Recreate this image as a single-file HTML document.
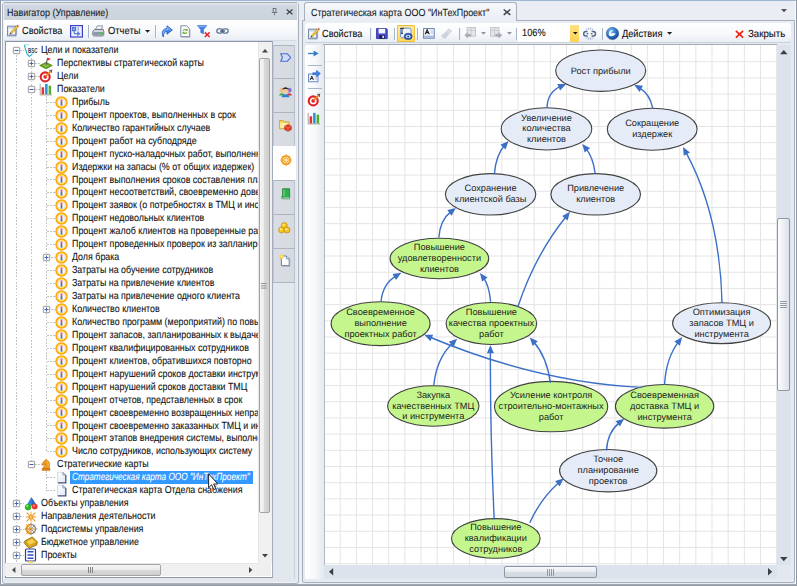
<!DOCTYPE html><html><head><meta charset="utf-8"><title>UI</title><style>
html,body{margin:0;padding:0;}
body{width:797px;height:586px;overflow:hidden;background:#eaeef4;font-family:"Liberation Sans",sans-serif;font-size:9px;color:#1a1a1a;position:relative;}
.a{position:absolute;}
.t{position:absolute;white-space:nowrap;line-height:13px;height:13px;}
.row{position:absolute;white-space:nowrap;line-height:13px;height:13px;font-size:10.3px;color:#111;transform:scaleX(0.862);transform-origin:0 50%;text-rendering:geometricPrecision;-webkit-text-stroke:0.1px currentColor;}
svg{position:absolute;overflow:visible;}
.dt{font-family:"Liberation Sans",sans-serif;font-size:9.22px;fill:#1c1c1c;text-anchor:middle;text-rendering:geometricPrecision;}
</style></head><body>
<div class="a" style="left:0;top:0;width:797px;height:1px;background:#9fb6d4"></div>
<div class="a" style="left:0;top:0;width:1px;height:586px;background:#8f97a4"></div>
<div class="a" style="left:1px;top:1px;width:1px;height:583px;background:#fbfcfd"></div>
<div class="a" style="left:796px;top:0;width:1px;height:586px;background:#8f97a4"></div>
<div class="a" style="left:795px;top:1px;width:1px;height:583px;background:#fbfcfd"></div>
<div class="a" style="left:0;top:584px;width:797px;height:2px;background:linear-gradient(#a9b0bb,#8b919b)"></div>
<div class="a" style="left:2px;top:2px;width:296.5px;height:581.5px;border:1px solid #abb1ba;border-radius:3px;background:#e3e8ef;box-sizing:border-box;box-shadow:inset 0 0 0 1px #eef1f6;"></div>
<div class="a" style="left:3px;top:3px;width:294.5px;height:2px;background:#dde2e9;"></div>
<div class="a" style="left:3.6px;top:4.7px;width:293.3px;height:15.5px;background:linear-gradient(#cfd6df,#cbd3dc);"></div>
<div class="a" style="left:4px;top:20.2px;width:292.5px;height:19.6px;background:linear-gradient(#ffffff,#f7f9fc 55%,#e9eef5);"></div>
<div class="a" style="left:4px;top:39.8px;width:292.5px;height:1.7px;background:linear-gradient(#c9d1dd,#dfe5ee);"></div>
<div class="a" style="left:4.6px;top:41.4px;width:268px;height:536.4px;border:1px solid #8d96a6;border-right-color:#a3acba;border-bottom-color:#9098a8;box-sizing:border-box;background:#fff;"></div>
<div class="row" style="left:7.2px;top:7.2px;color:#1c1c28;transform:scaleX(0.870);">Навигатор (Управление)</div>
<svg width="7" height="8" viewBox="0 0 7 8" style="left:270.8px;top:8.2px"><path d="M1.8,0.5 H5.2 M2.2,0.5 V4.3 M4.9,0.5 V4.3 M0.8,4.5 H6.2 M3.5,4.5 V7.2" fill="none" stroke="#666b76" stroke-width="0.9"/></svg>
<svg width="7.2" height="5.6" viewBox="0 0 7.2 5.6" style="left:286.0px;top:9.1px"><path d="M0.7,0.4 L6.5,5.3 M6.5,0.4 L0.7,5.3" stroke="#41454e" stroke-width="1.28"/></svg>
<svg width="12.5" height="12.5" viewBox="0 0 12.5 12.5" style="left:7.0px;top:24.3px"><rect x="0.6" y="2.2" width="8.2" height="9.6" fill="#f4f6fa" stroke="#6c7f9c" stroke-width="1"/><rect x="1.4" y="3" width="6.6" height="1.6" fill="#c9d4e6"/><path d="M2,10.9 H9.6 V4" fill="none" stroke="#8d9bb3" stroke-width="0.9"/><path d="M3.2,8.6 L9.6,1.8 L11,3.2 L4.6,9.8 Z" fill="#f2c93a" stroke="#a9821a" stroke-width="0.5"/><path d="M9.6,1.8 L10.5,0.8 L12,2.2 L11,3.2 Z" fill="#e0523a"/><path d="M3.2,8.6 L2.6,10.4 L4.6,9.8 Z" fill="#3a3a3a"/></svg>
<div class="row" style="left:21.5px;top:25.2px;color:#111;transform:scaleX(0.895);">Свойства</div>
<svg width="13" height="12.6" viewBox="0 0 13 12.6" style="left:69.5px;top:24.5px"><rect x="0.6" y="0.6" width="11.8" height="11.4" fill="#eef1ff" stroke="#3b40c4" stroke-width="1.2"/><rect x="2.6" y="2.6" width="3.2" height="3.2" fill="#7fa4ea" stroke="#2f55c0" stroke-width="0.7"/><path d="M8.2,2.4 V6.6" stroke="#2f55c0" stroke-width="1" stroke-dasharray="1 0.9"/><path d="M4.2,6 V8.8 H8" fill="none" stroke="#2f55c0" stroke-width="0.9"/><path d="M7.6,7 L10.2,8.8 L7.6,10.6 Z" fill="#5f8fe6" stroke="#2f55c0" stroke-width="0.5"/></svg>
<div class="a" style="left:87.9px;top:25.0px;width:1.3px;height:12.5px;background:#a6b2c6"></div>
<div class="a" style="left:88.9px;top:25.0px;width:1px;height:12.5px;background:#fff;opacity:.8"></div>
<svg width="12.6" height="12" viewBox="0 0 12.6 12" style="left:92.0px;top:24.6px"><path d="M3.4,4.6 L5.2,0.8 H10.6 L9.4,4.6 Z" fill="#f4f6f9" stroke="#7d8796" stroke-width="0.8"/><path d="M0.8,6.4 L2.6,4.4 H11.2 L11.8,6.4 V10 H0.8 Z" fill="#cfd5de" stroke="#5f6b7c" stroke-width="0.9"/><rect x="1.6" y="7" width="9.4" height="2.4" fill="#8e99a8"/><rect x="8" y="7.2" width="2.4" height="1.8" fill="#3fd03a"/><path d="M1.4,11 H11.2" stroke="#7d8796" stroke-width="1"/></svg>
<div class="row" style="left:108.2px;top:25.2px;color:#111;transform:scaleX(0.913);">Отчеты</div>
<svg width="5.2" height="2.8" viewBox="0 0 5.2 2.8" style="left:145.1px;top:29.8px"><path d="M0,0 H5.2 L2.6,2.8 Z" fill="#222"/></svg>
<div class="a" style="left:155.0px;top:25.0px;width:1.3px;height:12.5px;background:#a6b2c6"></div>
<div class="a" style="left:156.0px;top:25.0px;width:1px;height:12.5px;background:#fff;opacity:.8"></div>
<svg width="12" height="12.6" viewBox="0 0 12 12.6" style="left:161.0px;top:24.6px"><path d="M2.4,12 C0.2,8.4 1.2,3.8 6,3.6 V0.8 L11.4,5 L6,9.2 V6.6 C3.6,6.6 2.2,8.6 2.4,12 Z" fill="#3f86ea" stroke="#1f55b8" stroke-width="0.8"/><path d="M2.2,9 C2.2,6 3.8,4.6 6.6,4.6 V2.6 L9.8,5" fill="none" stroke="#a8ccff" stroke-width="0.8"/></svg>
<svg width="10.4" height="12.6" viewBox="0 0 10.4 12.6" style="left:179.6px;top:24.6px"><path d="M0.8,0.8 H6.6 L9.4,3.6 V11.6 H0.8 Z" fill="#fdfdfe" stroke="#737f92" stroke-width="0.9"/><path d="M1.6,12.2 H10 V4.4" fill="none" stroke="#9aa4b5" stroke-width="0.8"/><path d="M2.8,5.8 C3,3.8 5.6,3.2 6.8,4.4 L7.6,3.6 V6 H5.2 L6,5.2 C5.2,4.6 4,4.8 3.8,5.8 Z" fill="#5fae2e"/><path d="M7.4,7 C7.2,9 4.6,9.6 3.4,8.4 L2.6,9.2 V6.8 H5 L4.2,7.6 C5,8.2 6.2,8 6.4,7 Z" fill="#5fae2e"/></svg>
<svg width="13.4" height="12.4" viewBox="0 0 13.4 12.4" style="left:197.0px;top:24.8px"><path d="M0.4,0.6 H9.8 L6.4,4.6 V8.8 L3.8,7.6 V4.6 Z" fill="#3f83e6" stroke="#2a62c2" stroke-width="0.6"/><path d="M1.6,1.4 H8.6" stroke="#9cc4ff" stroke-width="0.8"/><path d="M7.8,7.4 L12.6,12 M12.6,7.4 L7.8,12" stroke="#e8232c" stroke-width="1.5"/></svg>
<svg width="13" height="6" viewBox="0 0 13 6" style="left:216.0px;top:28.2px"><rect x="0.8" y="0.9" width="6" height="4.2" rx="2.1" fill="none" stroke="#5a7194" stroke-width="1.25"/><rect x="6.2" y="0.9" width="6" height="4.2" rx="2.1" fill="none" stroke="#5a7194" stroke-width="1.25"/><path d="M4,3 H9" stroke="#364a6c" stroke-width="1.2"/></svg>
<div class="a" id="tree" style="left:5px;top:42px;width:253px;height:521px;overflow:hidden;">
<div class="a" style="left:10.5px;top:12.5px;width:1px;height:508.6px;background:repeating-linear-gradient(#a0a0a0 0,#a0a0a0 1.7px,transparent 1.7px,transparent 3.24px);opacity:.62"></div>
<div class="a" style="left:25.9px;top:15.5px;width:1px;height:403.2px;background:repeating-linear-gradient(#a0a0a0 0,#a0a0a0 1.7px,transparent 1.7px,transparent 3.24px);opacity:.62"></div>
<div class="a" style="left:41.3px;top:54.3px;width:1px;height:355.5px;background:repeating-linear-gradient(#a0a0a0 0,#a0a0a0 1.7px,transparent 1.7px,transparent 3.24px);opacity:.62"></div>
<div class="a" style="left:41.3px;top:428.7px;width:1px;height:19.9px;background:repeating-linear-gradient(#a0a0a0 0,#a0a0a0 1.7px,transparent 1.7px,transparent 3.24px);opacity:.62"></div>
<div class="a" style="left:15.0px;top:8.0px;height:1px;width:4.0px;background:repeating-linear-gradient(90deg,#a0a0a0 0,#a0a0a0 1.9px,transparent 1.9px,transparent 3.24px);opacity:.62"></div>
<svg width="9" height="9" viewBox="-4.5 -4.5 9 9" style="left:6.5px;top:4.0px"><rect x="-3.2" y="-3.2" width="6.4" height="6.4" rx="0.8" fill="#fafafa" stroke="#8f8f8f" stroke-width="0.9"/><path d="M-2,0 H2" stroke="#4260ae" stroke-width="1"/></svg>
<svg width="15" height="14" viewBox="-7.5 -7 15 14" style="left:18.3px;top:1.5px"><path d="M-6.2,-6.2 L-3.6,2.6 L-1.2,5.4 L1.8,3.2" fill="none" stroke="#2fb4c8" stroke-width="1.2"/><path d="M-6,-6.2 H-1.6" fill="none" stroke="#7fd4e0" stroke-width="0.8"/><path d="M1.8,3.2 L3.6,1.6" fill="none" stroke="#7fd4e0" stroke-width="0.8"/><text x="2.2" y="1.6" font-size="6.6" font-weight="bold" fill="#1f3f5f" text-anchor="middle" style="font-family:'Liberation Sans',sans-serif" textLength="9.4" lengthAdjust="spacingAndGlyphs">BSC</text></svg>
<div class="row" style="left:36.4px;top:2.1px;">Цели и показатели</div>
<div class="a" style="left:30.4px;top:20.9px;height:1px;width:4.4px;background:repeating-linear-gradient(90deg,#a0a0a0 0,#a0a0a0 1.9px,transparent 1.9px,transparent 3.24px);opacity:.62"></div>
<svg width="9" height="9" viewBox="-4.5 -4.5 9 9" style="left:21.9px;top:16.9px"><rect x="-3.2" y="-3.2" width="6.4" height="6.4" rx="0.8" fill="#fafafa" stroke="#8f8f8f" stroke-width="0.9"/><path d="M-2,0 H2 M0,-2 V2" stroke="#4260ae" stroke-width="0.95"/></svg>
<svg width="14" height="13" viewBox="-7 -6.5 14 13" style="left:34.3px;top:14.9px"><path d="M-6.4,2 L0,-1.2 L6.4,2 L0,5.4 Z" fill="#6aa520" stroke="#4c7d12" stroke-width="0.6"/><path d="M-3,2 L0,0.6 L3,2 L0,3.6 Z" fill="#9ad040"/><path d="M0.2,2 L1.4,-5.6" stroke="#555" stroke-width="1"/><path d="M1.5,-5.8 L5,-4.6 L1.2,-2.8 Z" fill="#e8212a"/></svg>
<div class="row" style="left:52.0px;top:15.0px;">Перспективы стратегической карты</div>
<div class="a" style="left:30.4px;top:33.8px;height:1px;width:4.4px;background:repeating-linear-gradient(90deg,#a0a0a0 0,#a0a0a0 1.9px,transparent 1.9px,transparent 3.24px);opacity:.62"></div>
<svg width="9" height="9" viewBox="-4.5 -4.5 9 9" style="left:21.9px;top:29.8px"><rect x="-3.2" y="-3.2" width="6.4" height="6.4" rx="0.8" fill="#fafafa" stroke="#8f8f8f" stroke-width="0.9"/><path d="M-2,0 H2 M0,-2 V2" stroke="#4260ae" stroke-width="0.95"/></svg>
<svg width="14" height="14" viewBox="-7 -7 14 14" style="left:34.3px;top:27.3px"><circle cx="-0.8" cy="0.9" r="4.5" fill="#fff" stroke="#e41f28" stroke-width="2.1"/><circle cx="-0.8" cy="0.9" r="1.8" fill="#e41f28"/><path d="M-0.4,0.4 L4.6,-4.6" stroke="#ee8a18" stroke-width="1.7"/><path d="M3.2,-5.6 L5.6,-5.8 L5.4,-3.2 M4.6,-4.6 L6.2,-6.2" fill="none" stroke="#4a4a4a" stroke-width="0.9"/></svg>
<div class="row" style="left:52.0px;top:27.9px;">Цели</div>
<div class="a" style="left:30.4px;top:46.8px;height:1px;width:4.4px;background:repeating-linear-gradient(90deg,#a0a0a0 0,#a0a0a0 1.9px,transparent 1.9px,transparent 3.24px);opacity:.62"></div>
<svg width="9" height="9" viewBox="-4.5 -4.5 9 9" style="left:21.9px;top:42.8px"><rect x="-3.2" y="-3.2" width="6.4" height="6.4" rx="0.8" fill="#fafafa" stroke="#8f8f8f" stroke-width="0.9"/><path d="M-2,0 H2" stroke="#4260ae" stroke-width="1"/></svg>
<svg width="14" height="13" viewBox="-7 -6.5 14 13" style="left:34.3px;top:40.8px"><rect x="-4.4" y="-2.2" width="2.5" height="7.2" fill="#e0323a"/><rect x="-0.9" y="-5.6" width="2.5" height="10.6" fill="#2d8fd8"/><rect x="2.6" y="-3.8" width="2.5" height="8.8" fill="#4cae2c"/><path d="M-5.8,-5.6 V5.4 H6" fill="none" stroke="#9c8a7a" stroke-width="0.8"/></svg>
<div class="row" style="left:52.0px;top:40.9px;">Показатели</div>
<div class="a" style="left:41.8px;top:59.7px;height:1px;width:8.5px;background:repeating-linear-gradient(90deg,#a0a0a0 0,#a0a0a0 1.9px,transparent 1.9px,transparent 3.24px);opacity:.62"></div>
<svg width="13" height="13" viewBox="-6.5 -6.5 13 13" style="left:50.3px;top:53.7px"><circle r="5.45" fill="#e6eeff" stroke="#ffa408" stroke-width="1.5"/><circle r="4.25" fill="none" stroke="#ffde28" stroke-width="0.9"/><circle r="2.6" fill="#f8faff"/><rect x="-0.9" y="-3" width="1.8" height="2.5" fill="#f0506a"/><rect x="-0.9" y="-0.5" width="1.8" height="3.6" fill="#6e6e78"/></svg>
<div class="row" style="left:67.3px;top:53.8px;">Прибыль</div>
<div class="a" style="left:41.8px;top:72.7px;height:1px;width:8.5px;background:repeating-linear-gradient(90deg,#a0a0a0 0,#a0a0a0 1.9px,transparent 1.9px,transparent 3.24px);opacity:.62"></div>
<svg width="13" height="13" viewBox="-6.5 -6.5 13 13" style="left:50.3px;top:66.7px"><circle r="5.45" fill="#e6eeff" stroke="#ffa408" stroke-width="1.5"/><circle r="4.25" fill="none" stroke="#ffde28" stroke-width="0.9"/><circle r="2.6" fill="#f8faff"/><rect x="-0.9" y="-3" width="1.8" height="2.5" fill="#f0506a"/><rect x="-0.9" y="-0.5" width="1.8" height="3.6" fill="#6e6e78"/></svg>
<div class="row" style="left:67.3px;top:66.8px;">Процент проектов, выполненных в срок</div>
<div class="a" style="left:41.8px;top:85.6px;height:1px;width:8.5px;background:repeating-linear-gradient(90deg,#a0a0a0 0,#a0a0a0 1.9px,transparent 1.9px,transparent 3.24px);opacity:.62"></div>
<svg width="13" height="13" viewBox="-6.5 -6.5 13 13" style="left:50.3px;top:79.6px"><circle r="5.45" fill="#e6eeff" stroke="#ffa408" stroke-width="1.5"/><circle r="4.25" fill="none" stroke="#ffde28" stroke-width="0.9"/><circle r="2.6" fill="#f8faff"/><rect x="-0.9" y="-3" width="1.8" height="2.5" fill="#f0506a"/><rect x="-0.9" y="-0.5" width="1.8" height="3.6" fill="#6e6e78"/></svg>
<div class="row" style="left:67.3px;top:79.7px;">Количество гарантийных случаев</div>
<div class="a" style="left:41.8px;top:98.6px;height:1px;width:8.5px;background:repeating-linear-gradient(90deg,#a0a0a0 0,#a0a0a0 1.9px,transparent 1.9px,transparent 3.24px);opacity:.62"></div>
<svg width="13" height="13" viewBox="-6.5 -6.5 13 13" style="left:50.3px;top:92.6px"><circle r="5.45" fill="#e6eeff" stroke="#ffa408" stroke-width="1.5"/><circle r="4.25" fill="none" stroke="#ffde28" stroke-width="0.9"/><circle r="2.6" fill="#f8faff"/><rect x="-0.9" y="-3" width="1.8" height="2.5" fill="#f0506a"/><rect x="-0.9" y="-0.5" width="1.8" height="3.6" fill="#6e6e78"/></svg>
<div class="row" style="left:67.3px;top:92.7px;">Процент работ на субподряде</div>
<div class="a" style="left:41.8px;top:111.5px;height:1px;width:8.5px;background:repeating-linear-gradient(90deg,#a0a0a0 0,#a0a0a0 1.9px,transparent 1.9px,transparent 3.24px);opacity:.62"></div>
<svg width="13" height="13" viewBox="-6.5 -6.5 13 13" style="left:50.3px;top:105.5px"><circle r="5.45" fill="#e6eeff" stroke="#ffa408" stroke-width="1.5"/><circle r="4.25" fill="none" stroke="#ffde28" stroke-width="0.9"/><circle r="2.6" fill="#f8faff"/><rect x="-0.9" y="-3" width="1.8" height="2.5" fill="#f0506a"/><rect x="-0.9" y="-0.5" width="1.8" height="3.6" fill="#6e6e78"/></svg>
<div class="row" style="left:67.3px;top:105.6px;">Процент пуско-наладочных работ, выполненных в срок</div>
<div class="a" style="left:41.8px;top:124.5px;height:1px;width:8.5px;background:repeating-linear-gradient(90deg,#a0a0a0 0,#a0a0a0 1.9px,transparent 1.9px,transparent 3.24px);opacity:.62"></div>
<svg width="13" height="13" viewBox="-6.5 -6.5 13 13" style="left:50.3px;top:118.5px"><circle r="5.45" fill="#e6eeff" stroke="#ffa408" stroke-width="1.5"/><circle r="4.25" fill="none" stroke="#ffde28" stroke-width="0.9"/><circle r="2.6" fill="#f8faff"/><rect x="-0.9" y="-3" width="1.8" height="2.5" fill="#f0506a"/><rect x="-0.9" y="-0.5" width="1.8" height="3.6" fill="#6e6e78"/></svg>
<div class="row" style="left:67.3px;top:118.6px;">Издержки на запасы (% от общих издержек)</div>
<div class="a" style="left:41.8px;top:137.4px;height:1px;width:8.5px;background:repeating-linear-gradient(90deg,#a0a0a0 0,#a0a0a0 1.9px,transparent 1.9px,transparent 3.24px);opacity:.62"></div>
<svg width="13" height="13" viewBox="-6.5 -6.5 13 13" style="left:50.3px;top:131.4px"><circle r="5.45" fill="#e6eeff" stroke="#ffa408" stroke-width="1.5"/><circle r="4.25" fill="none" stroke="#ffde28" stroke-width="0.9"/><circle r="2.6" fill="#f8faff"/><rect x="-0.9" y="-3" width="1.8" height="2.5" fill="#f0506a"/><rect x="-0.9" y="-0.5" width="1.8" height="3.6" fill="#6e6e78"/></svg>
<div class="row" style="left:67.3px;top:131.5px;">Процент выполнения сроков составления планов</div>
<div class="a" style="left:41.8px;top:150.3px;height:1px;width:8.5px;background:repeating-linear-gradient(90deg,#a0a0a0 0,#a0a0a0 1.9px,transparent 1.9px,transparent 3.24px);opacity:.62"></div>
<svg width="13" height="13" viewBox="-6.5 -6.5 13 13" style="left:50.3px;top:144.3px"><circle r="5.45" fill="#e6eeff" stroke="#ffa408" stroke-width="1.5"/><circle r="4.25" fill="none" stroke="#ffde28" stroke-width="0.9"/><circle r="2.6" fill="#f8faff"/><rect x="-0.9" y="-3" width="1.8" height="2.5" fill="#f0506a"/><rect x="-0.9" y="-0.5" width="1.8" height="3.6" fill="#6e6e78"/></svg>
<div class="row" style="left:67.3px;top:144.4px;">Процент несоответствий, своевременно доведенных</div>
<div class="a" style="left:41.8px;top:163.3px;height:1px;width:8.5px;background:repeating-linear-gradient(90deg,#a0a0a0 0,#a0a0a0 1.9px,transparent 1.9px,transparent 3.24px);opacity:.62"></div>
<svg width="13" height="13" viewBox="-6.5 -6.5 13 13" style="left:50.3px;top:157.3px"><circle r="5.45" fill="#e6eeff" stroke="#ffa408" stroke-width="1.5"/><circle r="4.25" fill="none" stroke="#ffde28" stroke-width="0.9"/><circle r="2.6" fill="#f8faff"/><rect x="-0.9" y="-3" width="1.8" height="2.5" fill="#f0506a"/><rect x="-0.9" y="-0.5" width="1.8" height="3.6" fill="#6e6e78"/></svg>
<div class="row" style="left:67.3px;top:157.4px;">Процент заявок (о потребностях в ТМЦ и инструменте)</div>
<div class="a" style="left:41.8px;top:176.2px;height:1px;width:8.5px;background:repeating-linear-gradient(90deg,#a0a0a0 0,#a0a0a0 1.9px,transparent 1.9px,transparent 3.24px);opacity:.62"></div>
<svg width="13" height="13" viewBox="-6.5 -6.5 13 13" style="left:50.3px;top:170.2px"><circle r="5.45" fill="#e6eeff" stroke="#ffa408" stroke-width="1.5"/><circle r="4.25" fill="none" stroke="#ffde28" stroke-width="0.9"/><circle r="2.6" fill="#f8faff"/><rect x="-0.9" y="-3" width="1.8" height="2.5" fill="#f0506a"/><rect x="-0.9" y="-0.5" width="1.8" height="3.6" fill="#6e6e78"/></svg>
<div class="row" style="left:67.3px;top:170.3px;">Процент недовольных клиентов</div>
<div class="a" style="left:41.8px;top:189.2px;height:1px;width:8.5px;background:repeating-linear-gradient(90deg,#a0a0a0 0,#a0a0a0 1.9px,transparent 1.9px,transparent 3.24px);opacity:.62"></div>
<svg width="13" height="13" viewBox="-6.5 -6.5 13 13" style="left:50.3px;top:183.2px"><circle r="5.45" fill="#e6eeff" stroke="#ffa408" stroke-width="1.5"/><circle r="4.25" fill="none" stroke="#ffde28" stroke-width="0.9"/><circle r="2.6" fill="#f8faff"/><rect x="-0.9" y="-3" width="1.8" height="2.5" fill="#f0506a"/><rect x="-0.9" y="-0.5" width="1.8" height="3.6" fill="#6e6e78"/></svg>
<div class="row" style="left:67.3px;top:183.3px;">Процент жалоб клиентов на проверенные работы</div>
<div class="a" style="left:41.8px;top:202.1px;height:1px;width:8.5px;background:repeating-linear-gradient(90deg,#a0a0a0 0,#a0a0a0 1.9px,transparent 1.9px,transparent 3.24px);opacity:.62"></div>
<svg width="13" height="13" viewBox="-6.5 -6.5 13 13" style="left:50.3px;top:196.1px"><circle r="5.45" fill="#e6eeff" stroke="#ffa408" stroke-width="1.5"/><circle r="4.25" fill="none" stroke="#ffde28" stroke-width="0.9"/><circle r="2.6" fill="#f8faff"/><rect x="-0.9" y="-3" width="1.8" height="2.5" fill="#f0506a"/><rect x="-0.9" y="-0.5" width="1.8" height="3.6" fill="#6e6e78"/></svg>
<div class="row" style="left:67.3px;top:196.2px;">Процент проведенных проверок из запланированных</div>
<div class="a" style="left:45.8px;top:215.1px;height:1px;width:4.5px;background:repeating-linear-gradient(90deg,#a0a0a0 0,#a0a0a0 1.9px,transparent 1.9px,transparent 3.24px);opacity:.62"></div>
<svg width="9" height="9" viewBox="-4.5 -4.5 9 9" style="left:37.3px;top:211.1px"><rect x="-3.2" y="-3.2" width="6.4" height="6.4" rx="0.8" fill="#fafafa" stroke="#8f8f8f" stroke-width="0.9"/><path d="M-2,0 H2 M0,-2 V2" stroke="#4260ae" stroke-width="0.95"/></svg>
<svg width="13" height="13" viewBox="-6.5 -6.5 13 13" style="left:50.3px;top:209.1px"><circle r="5.45" fill="#e6eeff" stroke="#ffa408" stroke-width="1.5"/><circle r="4.25" fill="none" stroke="#ffde28" stroke-width="0.9"/><circle r="2.6" fill="#f8faff"/><rect x="-0.9" y="-3" width="1.8" height="2.5" fill="#f0506a"/><rect x="-0.9" y="-0.5" width="1.8" height="3.6" fill="#6e6e78"/></svg>
<div class="row" style="left:67.3px;top:209.2px;">Доля брака</div>
<div class="a" style="left:41.8px;top:228.0px;height:1px;width:8.5px;background:repeating-linear-gradient(90deg,#a0a0a0 0,#a0a0a0 1.9px,transparent 1.9px,transparent 3.24px);opacity:.62"></div>
<svg width="13" height="13" viewBox="-6.5 -6.5 13 13" style="left:50.3px;top:222.0px"><circle r="5.45" fill="#e6eeff" stroke="#ffa408" stroke-width="1.5"/><circle r="4.25" fill="none" stroke="#ffde28" stroke-width="0.9"/><circle r="2.6" fill="#f8faff"/><rect x="-0.9" y="-3" width="1.8" height="2.5" fill="#f0506a"/><rect x="-0.9" y="-0.5" width="1.8" height="3.6" fill="#6e6e78"/></svg>
<div class="row" style="left:67.3px;top:222.1px;">Затраты на обучение сотрудников</div>
<div class="a" style="left:41.8px;top:241.0px;height:1px;width:8.5px;background:repeating-linear-gradient(90deg,#a0a0a0 0,#a0a0a0 1.9px,transparent 1.9px,transparent 3.24px);opacity:.62"></div>
<svg width="13" height="13" viewBox="-6.5 -6.5 13 13" style="left:50.3px;top:235.0px"><circle r="5.45" fill="#e6eeff" stroke="#ffa408" stroke-width="1.5"/><circle r="4.25" fill="none" stroke="#ffde28" stroke-width="0.9"/><circle r="2.6" fill="#f8faff"/><rect x="-0.9" y="-3" width="1.8" height="2.5" fill="#f0506a"/><rect x="-0.9" y="-0.5" width="1.8" height="3.6" fill="#6e6e78"/></svg>
<div class="row" style="left:67.3px;top:235.1px;">Затраты на привлечение клиентов</div>
<div class="a" style="left:41.8px;top:253.9px;height:1px;width:8.5px;background:repeating-linear-gradient(90deg,#a0a0a0 0,#a0a0a0 1.9px,transparent 1.9px,transparent 3.24px);opacity:.62"></div>
<svg width="13" height="13" viewBox="-6.5 -6.5 13 13" style="left:50.3px;top:247.9px"><circle r="5.45" fill="#e6eeff" stroke="#ffa408" stroke-width="1.5"/><circle r="4.25" fill="none" stroke="#ffde28" stroke-width="0.9"/><circle r="2.6" fill="#f8faff"/><rect x="-0.9" y="-3" width="1.8" height="2.5" fill="#f0506a"/><rect x="-0.9" y="-0.5" width="1.8" height="3.6" fill="#6e6e78"/></svg>
<div class="row" style="left:67.3px;top:248.0px;">Затраты на привлечение одного клиента</div>
<div class="a" style="left:45.8px;top:266.8px;height:1px;width:4.5px;background:repeating-linear-gradient(90deg,#a0a0a0 0,#a0a0a0 1.9px,transparent 1.9px,transparent 3.24px);opacity:.62"></div>
<svg width="9" height="9" viewBox="-4.5 -4.5 9 9" style="left:37.3px;top:262.8px"><rect x="-3.2" y="-3.2" width="6.4" height="6.4" rx="0.8" fill="#fafafa" stroke="#8f8f8f" stroke-width="0.9"/><path d="M-2,0 H2 M0,-2 V2" stroke="#4260ae" stroke-width="0.95"/></svg>
<svg width="13" height="13" viewBox="-6.5 -6.5 13 13" style="left:50.3px;top:260.8px"><circle r="5.45" fill="#e6eeff" stroke="#ffa408" stroke-width="1.5"/><circle r="4.25" fill="none" stroke="#ffde28" stroke-width="0.9"/><circle r="2.6" fill="#f8faff"/><rect x="-0.9" y="-3" width="1.8" height="2.5" fill="#f0506a"/><rect x="-0.9" y="-0.5" width="1.8" height="3.6" fill="#6e6e78"/></svg>
<div class="row" style="left:67.3px;top:260.9px;">Количество клиентов</div>
<div class="a" style="left:41.8px;top:279.8px;height:1px;width:8.5px;background:repeating-linear-gradient(90deg,#a0a0a0 0,#a0a0a0 1.9px,transparent 1.9px,transparent 3.24px);opacity:.62"></div>
<svg width="13" height="13" viewBox="-6.5 -6.5 13 13" style="left:50.3px;top:273.8px"><circle r="5.45" fill="#e6eeff" stroke="#ffa408" stroke-width="1.5"/><circle r="4.25" fill="none" stroke="#ffde28" stroke-width="0.9"/><circle r="2.6" fill="#f8faff"/><rect x="-0.9" y="-3" width="1.8" height="2.5" fill="#f0506a"/><rect x="-0.9" y="-0.5" width="1.8" height="3.6" fill="#6e6e78"/></svg>
<div class="row" style="left:67.3px;top:273.9px;">Количество программ (мероприятий) по повышению</div>
<div class="a" style="left:41.8px;top:292.7px;height:1px;width:8.5px;background:repeating-linear-gradient(90deg,#a0a0a0 0,#a0a0a0 1.9px,transparent 1.9px,transparent 3.24px);opacity:.62"></div>
<svg width="13" height="13" viewBox="-6.5 -6.5 13 13" style="left:50.3px;top:286.7px"><circle r="5.45" fill="#e6eeff" stroke="#ffa408" stroke-width="1.5"/><circle r="4.25" fill="none" stroke="#ffde28" stroke-width="0.9"/><circle r="2.6" fill="#f8faff"/><rect x="-0.9" y="-3" width="1.8" height="2.5" fill="#f0506a"/><rect x="-0.9" y="-0.5" width="1.8" height="3.6" fill="#6e6e78"/></svg>
<div class="row" style="left:67.3px;top:286.8px;">Процент запасов, запланированных к выдаче</div>
<div class="a" style="left:41.8px;top:305.7px;height:1px;width:8.5px;background:repeating-linear-gradient(90deg,#a0a0a0 0,#a0a0a0 1.9px,transparent 1.9px,transparent 3.24px);opacity:.62"></div>
<svg width="13" height="13" viewBox="-6.5 -6.5 13 13" style="left:50.3px;top:299.7px"><circle r="5.45" fill="#e6eeff" stroke="#ffa408" stroke-width="1.5"/><circle r="4.25" fill="none" stroke="#ffde28" stroke-width="0.9"/><circle r="2.6" fill="#f8faff"/><rect x="-0.9" y="-3" width="1.8" height="2.5" fill="#f0506a"/><rect x="-0.9" y="-0.5" width="1.8" height="3.6" fill="#6e6e78"/></svg>
<div class="row" style="left:67.3px;top:299.8px;">Процент квалифицированных сотрудников</div>
<div class="a" style="left:41.8px;top:318.6px;height:1px;width:8.5px;background:repeating-linear-gradient(90deg,#a0a0a0 0,#a0a0a0 1.9px,transparent 1.9px,transparent 3.24px);opacity:.62"></div>
<svg width="13" height="13" viewBox="-6.5 -6.5 13 13" style="left:50.3px;top:312.6px"><circle r="5.45" fill="#e6eeff" stroke="#ffa408" stroke-width="1.5"/><circle r="4.25" fill="none" stroke="#ffde28" stroke-width="0.9"/><circle r="2.6" fill="#f8faff"/><rect x="-0.9" y="-3" width="1.8" height="2.5" fill="#f0506a"/><rect x="-0.9" y="-0.5" width="1.8" height="3.6" fill="#6e6e78"/></svg>
<div class="row" style="left:67.3px;top:312.7px;">Процент клиентов, обратившихся повторно</div>
<div class="a" style="left:41.8px;top:331.6px;height:1px;width:8.5px;background:repeating-linear-gradient(90deg,#a0a0a0 0,#a0a0a0 1.9px,transparent 1.9px,transparent 3.24px);opacity:.62"></div>
<svg width="13" height="13" viewBox="-6.5 -6.5 13 13" style="left:50.3px;top:325.6px"><circle r="5.45" fill="#e6eeff" stroke="#ffa408" stroke-width="1.5"/><circle r="4.25" fill="none" stroke="#ffde28" stroke-width="0.9"/><circle r="2.6" fill="#f8faff"/><rect x="-0.9" y="-3" width="1.8" height="2.5" fill="#f0506a"/><rect x="-0.9" y="-0.5" width="1.8" height="3.6" fill="#6e6e78"/></svg>
<div class="row" style="left:67.3px;top:325.7px;">Процент нарушений сроков доставки инструмента</div>
<div class="a" style="left:41.8px;top:344.5px;height:1px;width:8.5px;background:repeating-linear-gradient(90deg,#a0a0a0 0,#a0a0a0 1.9px,transparent 1.9px,transparent 3.24px);opacity:.62"></div>
<svg width="13" height="13" viewBox="-6.5 -6.5 13 13" style="left:50.3px;top:338.5px"><circle r="5.45" fill="#e6eeff" stroke="#ffa408" stroke-width="1.5"/><circle r="4.25" fill="none" stroke="#ffde28" stroke-width="0.9"/><circle r="2.6" fill="#f8faff"/><rect x="-0.9" y="-3" width="1.8" height="2.5" fill="#f0506a"/><rect x="-0.9" y="-0.5" width="1.8" height="3.6" fill="#6e6e78"/></svg>
<div class="row" style="left:67.3px;top:338.6px;">Процент нарушений сроков доставки ТМЦ</div>
<div class="a" style="left:41.8px;top:357.5px;height:1px;width:8.5px;background:repeating-linear-gradient(90deg,#a0a0a0 0,#a0a0a0 1.9px,transparent 1.9px,transparent 3.24px);opacity:.62"></div>
<svg width="13" height="13" viewBox="-6.5 -6.5 13 13" style="left:50.3px;top:351.5px"><circle r="5.45" fill="#e6eeff" stroke="#ffa408" stroke-width="1.5"/><circle r="4.25" fill="none" stroke="#ffde28" stroke-width="0.9"/><circle r="2.6" fill="#f8faff"/><rect x="-0.9" y="-3" width="1.8" height="2.5" fill="#f0506a"/><rect x="-0.9" y="-0.5" width="1.8" height="3.6" fill="#6e6e78"/></svg>
<div class="row" style="left:67.3px;top:351.6px;">Процент отчетов, представленных в срок</div>
<div class="a" style="left:41.8px;top:370.4px;height:1px;width:8.5px;background:repeating-linear-gradient(90deg,#a0a0a0 0,#a0a0a0 1.9px,transparent 1.9px,transparent 3.24px);opacity:.62"></div>
<svg width="13" height="13" viewBox="-6.5 -6.5 13 13" style="left:50.3px;top:364.4px"><circle r="5.45" fill="#e6eeff" stroke="#ffa408" stroke-width="1.5"/><circle r="4.25" fill="none" stroke="#ffde28" stroke-width="0.9"/><circle r="2.6" fill="#f8faff"/><rect x="-0.9" y="-3" width="1.8" height="2.5" fill="#f0506a"/><rect x="-0.9" y="-0.5" width="1.8" height="3.6" fill="#6e6e78"/></svg>
<div class="row" style="left:67.3px;top:364.5px;">Процент своевременно возвращенных неправильно</div>
<div class="a" style="left:41.8px;top:383.4px;height:1px;width:8.5px;background:repeating-linear-gradient(90deg,#a0a0a0 0,#a0a0a0 1.9px,transparent 1.9px,transparent 3.24px);opacity:.62"></div>
<svg width="13" height="13" viewBox="-6.5 -6.5 13 13" style="left:50.3px;top:377.4px"><circle r="5.45" fill="#e6eeff" stroke="#ffa408" stroke-width="1.5"/><circle r="4.25" fill="none" stroke="#ffde28" stroke-width="0.9"/><circle r="2.6" fill="#f8faff"/><rect x="-0.9" y="-3" width="1.8" height="2.5" fill="#f0506a"/><rect x="-0.9" y="-0.5" width="1.8" height="3.6" fill="#6e6e78"/></svg>
<div class="row" style="left:67.3px;top:377.5px;">Процент своевременно заказанных ТМЦ и инструмента</div>
<div class="a" style="left:41.8px;top:396.3px;height:1px;width:8.5px;background:repeating-linear-gradient(90deg,#a0a0a0 0,#a0a0a0 1.9px,transparent 1.9px,transparent 3.24px);opacity:.62"></div>
<svg width="13" height="13" viewBox="-6.5 -6.5 13 13" style="left:50.3px;top:390.3px"><circle r="5.45" fill="#e6eeff" stroke="#ffa408" stroke-width="1.5"/><circle r="4.25" fill="none" stroke="#ffde28" stroke-width="0.9"/><circle r="2.6" fill="#f8faff"/><rect x="-0.9" y="-3" width="1.8" height="2.5" fill="#f0506a"/><rect x="-0.9" y="-0.5" width="1.8" height="3.6" fill="#6e6e78"/></svg>
<div class="row" style="left:67.3px;top:390.4px;">Процент этапов внедрения системы, выполненных</div>
<div class="a" style="left:41.8px;top:409.2px;height:1px;width:8.5px;background:repeating-linear-gradient(90deg,#a0a0a0 0,#a0a0a0 1.9px,transparent 1.9px,transparent 3.24px);opacity:.62"></div>
<svg width="13" height="13" viewBox="-6.5 -6.5 13 13" style="left:50.3px;top:403.2px"><circle r="5.45" fill="#e6eeff" stroke="#ffa408" stroke-width="1.5"/><circle r="4.25" fill="none" stroke="#ffde28" stroke-width="0.9"/><circle r="2.6" fill="#f8faff"/><rect x="-0.9" y="-3" width="1.8" height="2.5" fill="#f0506a"/><rect x="-0.9" y="-0.5" width="1.8" height="3.6" fill="#6e6e78"/></svg>
<div class="row" style="left:67.3px;top:403.3px;">Число сотрудников, использующих систему</div>
<div class="a" style="left:30.4px;top:422.2px;height:1px;width:4.4px;background:repeating-linear-gradient(90deg,#a0a0a0 0,#a0a0a0 1.9px,transparent 1.9px,transparent 3.24px);opacity:.62"></div>
<svg width="9" height="9" viewBox="-4.5 -4.5 9 9" style="left:21.9px;top:418.2px"><rect x="-3.2" y="-3.2" width="6.4" height="6.4" rx="0.8" fill="#fafafa" stroke="#8f8f8f" stroke-width="0.9"/><path d="M-2,0 H2" stroke="#4260ae" stroke-width="1"/></svg>
<svg width="10" height="12" viewBox="-5 -6 10 12" style="left:36.3px;top:416.7px"><path d="M0.2,-5.7 L1.3,-4.6 C3.6,-3.6 4.2,-0.6 3.2,2.4 L3.6,3.5 H-3.2 L-2.8,2.4 C-1.6,1.2 -0.2,0.4 0,-1 C-0.8,-0.5 -1.6,-0.3 -2.2,-0.1 L-3.2,0.7 L-4.3,-0.6 L-1.6,-4.3 Z" fill="#f09a1c" stroke="#b8660a" stroke-width="0.6" stroke-linejoin="round"/><path d="M0.6,-3.8 C2.2,-2.8 2.6,-0.8 2,1.6" fill="none" stroke="#ffc860" stroke-width="0.8"/><rect x="-3.9" y="3.5" width="8" height="1.9" rx="0.4" fill="#e88a10" stroke="#b8660a" stroke-width="0.5"/></svg>
<div class="row" style="left:52.0px;top:416.3px;">Стратегические карты</div>
<div class="a" style="left:41.8px;top:435.1px;height:1px;width:8.5px;background:repeating-linear-gradient(90deg,#a0a0a0 0,#a0a0a0 1.9px,transparent 1.9px,transparent 3.24px);opacity:.62"></div>
<svg width="11" height="13" viewBox="-5.5 -6.5 11 13" style="left:51.3px;top:429.1px"><defs><linearGradient id="dg" x1="0" y1="0" x2="1" y2="1"><stop offset="0" stop-color="#ffffff"/><stop offset="1" stop-color="#dfe8f4"/></linearGradient></defs><path d="M-3.9,-5.3 H1.4 L4.2,-2.5 V5.2 H-3.9 Z" fill="url(#dg)" stroke="#c3cddd" stroke-width="0.7"/><path d="M1.4,-5.3 V-2.5 H4.2 Z" fill="#d3dcea" stroke="#6f7f9c" stroke-width="0.6"/><path d="M4.3,-2.5 V5.4 H-3.6" fill="none" stroke="#46577a" stroke-width="1.25"/></svg>
<div class="a" style="left:65.2px;top:429.4px;width:182.8px;height:12.5px;background:#3399ff"></div>
<div class="row" style="left:67.3px;top:429.2px;color:#fff;font-style:italic;transform:scaleX(0.798);">Стратегическая карта ООО "ИнТехПроект"</div>
<div class="a" style="left:41.8px;top:448.1px;height:1px;width:8.5px;background:repeating-linear-gradient(90deg,#a0a0a0 0,#a0a0a0 1.9px,transparent 1.9px,transparent 3.24px);opacity:.62"></div>
<svg width="11" height="13" viewBox="-5.5 -6.5 11 13" style="left:51.3px;top:442.1px"><defs><linearGradient id="dg" x1="0" y1="0" x2="1" y2="1"><stop offset="0" stop-color="#ffffff"/><stop offset="1" stop-color="#dfe8f4"/></linearGradient></defs><path d="M-3.9,-5.3 H1.4 L4.2,-2.5 V5.2 H-3.9 Z" fill="url(#dg)" stroke="#c3cddd" stroke-width="0.7"/><path d="M1.4,-5.3 V-2.5 H4.2 Z" fill="#d3dcea" stroke="#6f7f9c" stroke-width="0.6"/><path d="M4.3,-2.5 V5.4 H-3.6" fill="none" stroke="#46577a" stroke-width="1.25"/></svg>
<div class="row" style="left:67.3px;top:442.2px;">Стратегическая карта Отдела снабжения</div>
<div class="a" style="left:15.0px;top:461.0px;height:1px;width:4.0px;background:repeating-linear-gradient(90deg,#a0a0a0 0,#a0a0a0 1.9px,transparent 1.9px,transparent 3.24px);opacity:.62"></div>
<svg width="9" height="9" viewBox="-4.5 -4.5 9 9" style="left:6.5px;top:457.0px"><rect x="-3.2" y="-3.2" width="6.4" height="6.4" rx="0.8" fill="#fafafa" stroke="#8f8f8f" stroke-width="0.9"/><path d="M-2,0 H2 M0,-2 V2" stroke="#4260ae" stroke-width="0.95"/></svg>
<svg width="14" height="14" viewBox="-7 -7 14 14" style="left:18.8px;top:454.5px"><path d="M-4.2,1.6 L0.4,-6.4 L5.2,1.2 Z" fill="#3a86e0" stroke="#2a62b0" stroke-width="0.5"/><path d="M0.4,-6.4 L0.8,1.6 L5.2,1.2 Z" fill="#2468c8"/><circle cx="3.7" cy="2.5" r="2.9" fill="#ea3a30"/><circle cx="3" cy="1.7" r="1" fill="#ff9088"/><circle cx="-2.9" cy="3.2" r="3.2" fill="#2fb52c"/><circle cx="-3.7" cy="2.2" r="1.1" fill="#8be88a"/></svg>
<div class="row" style="left:36.4px;top:455.1px;">Объекты управления</div>
<div class="a" style="left:15.0px;top:474.0px;height:1px;width:4.0px;background:repeating-linear-gradient(90deg,#a0a0a0 0,#a0a0a0 1.9px,transparent 1.9px,transparent 3.24px);opacity:.62"></div>
<svg width="9" height="9" viewBox="-4.5 -4.5 9 9" style="left:6.5px;top:470.0px"><rect x="-3.2" y="-3.2" width="6.4" height="6.4" rx="0.8" fill="#fafafa" stroke="#8f8f8f" stroke-width="0.9"/><path d="M-2,0 H2 M0,-2 V2" stroke="#4260ae" stroke-width="0.95"/></svg>
<svg width="14" height="14" viewBox="-7 -7 14 14" style="left:18.8px;top:467.5px"><path d="M0,-6.4 L0.9,-0.9 L6.4,0 L0.9,0.9 L0,6.4 L-0.9,0.9 L-6.4,0 L-0.9,-0.9 Z" fill="#e8961e"/><path d="M-4.4,-4.4 L4.4,4.4 M4.4,-4.4 L-4.4,4.4" stroke="#e8961e" stroke-width="1.1"/><circle r="1.3" fill="#f8c060"/></svg>
<div class="row" style="left:36.4px;top:468.1px;">Направления деятельности</div>
<div class="a" style="left:15.0px;top:486.9px;height:1px;width:4.0px;background:repeating-linear-gradient(90deg,#a0a0a0 0,#a0a0a0 1.9px,transparent 1.9px,transparent 3.24px);opacity:.62"></div>
<svg width="9" height="9" viewBox="-4.5 -4.5 9 9" style="left:6.5px;top:482.9px"><rect x="-3.2" y="-3.2" width="6.4" height="6.4" rx="0.8" fill="#fafafa" stroke="#8f8f8f" stroke-width="0.9"/><path d="M-2,0 H2 M0,-2 V2" stroke="#4260ae" stroke-width="0.95"/></svg>
<svg width="14" height="14" viewBox="-7 -7 14 14" style="left:18.8px;top:480.4px"><circle r="4.6" fill="#fdf3dc" stroke="#8a8a8a" stroke-width="1.3"/><path d="M0,-4.6 A4.6,4.6 0 0 0 0,4.6" fill="none" stroke="#f0961a" stroke-width="1.8"/><path d="M0,-6.2 V6.2 M-6.2,0 H6.2 M-4.4,-4.4 L4.4,4.4 M4.4,-4.4 L-4.4,4.4" stroke="#8c8c8c" stroke-width="0.8"/><path d="M0,0 L-6.2,0 M0,0 L-4.4,-4.4 M0,0 L-4.4,4.4" stroke="#e8961e" stroke-width="0.9"/><circle r="1.5" fill="#e8961e"/></svg>
<div class="row" style="left:36.4px;top:481.0px;">Подсистемы управления</div>
<div class="a" style="left:15.0px;top:499.9px;height:1px;width:4.0px;background:repeating-linear-gradient(90deg,#a0a0a0 0,#a0a0a0 1.9px,transparent 1.9px,transparent 3.24px);opacity:.62"></div>
<svg width="9" height="9" viewBox="-4.5 -4.5 9 9" style="left:6.5px;top:495.9px"><rect x="-3.2" y="-3.2" width="6.4" height="6.4" rx="0.8" fill="#fafafa" stroke="#8f8f8f" stroke-width="0.9"/><path d="M-2,0 H2 M0,-2 V2" stroke="#4260ae" stroke-width="0.95"/></svg>
<svg width="14" height="13" viewBox="-7 -6.5 14 13" style="left:18.8px;top:493.9px"><path d="M-6.4,-1.4 L1.4,-5.6 L6.4,-0.6 L5.6,2.6 L-2,5.8 L-6.2,1.2 Z" fill="#d9a21a" stroke="#8c6208" stroke-width="0.8"/><path d="M-4.4,-1 L1,-3.8 L4.4,-0.4 L-1.4,2.6 Z" fill="#f3cf52"/></svg>
<div class="row" style="left:36.4px;top:494.0px;">Бюджетное управление</div>
<div class="a" style="left:15.0px;top:512.8px;height:1px;width:4.0px;background:repeating-linear-gradient(90deg,#a0a0a0 0,#a0a0a0 1.9px,transparent 1.9px,transparent 3.24px);opacity:.62"></div>
<svg width="9" height="9" viewBox="-4.5 -4.5 9 9" style="left:6.5px;top:508.8px"><rect x="-3.2" y="-3.2" width="6.4" height="6.4" rx="0.8" fill="#fafafa" stroke="#8f8f8f" stroke-width="0.9"/><path d="M-2,0 H2 M0,-2 V2" stroke="#4260ae" stroke-width="0.95"/></svg>
<svg width="13" height="14" viewBox="-6.5 -7 13 14" style="left:19.3px;top:506.3px"><rect x="-5" y="-6" width="10" height="12" rx="1" fill="#fff" stroke="#2c3f9a" stroke-width="1.2"/><path d="M-3,-3.2 H3 M-3,0 H3 M-3,3.2 H3" stroke="#2c4fc8" stroke-width="1.6"/></svg>
<div class="row" style="left:36.4px;top:506.9px;">Проекты</div>
<div class="a" style="left:23.4px;top:519.3px;width:4.6px;height:2.6px;background:#f3d66a;border-radius:1px 1px 0 0"></div>
</div>
<div class="a" style="left:258px;top:42px;width:14px;height:521px;background:#f0f0f0;border-left:1px solid #e6e6e6;box-sizing:border-box"></div>
<svg width="6" height="3.4" viewBox="0 0 6 3.4" style="left:262.3px;top:49.2px"><path d="M0,3.4 L3,0 L6,3.4 Z" fill="#444"/></svg>
<svg width="6" height="3.4" viewBox="0 0 6 3.4" style="left:262.3px;top:553.8px"><path d="M0,0 L3,3.4 L6,0 Z" fill="#444"/></svg>
<div class="a" style="left:258.6px;top:58px;width:11.5px;height:455px;border:1px solid #a2a2a2;border-radius:2px;box-sizing:border-box;background:linear-gradient(90deg,#f6f6f6,#ececec 45%,#d9d9d9 50%,#cfcfcf);"></div>
<svg width="5.6" height="6" viewBox="0 0 5.6 6" style="left:261.0px;top:282.6px"><path d="M0,0.5 H5.6 M0,2.8 H5.6 M0,5.1 H5.6" stroke="#8a8a8a" stroke-width="0.9"/></svg>
<div class="a" style="left:5px;top:563px;width:253px;height:13px;background:#f0f0f0;border-top:1px solid #e6e6e6;box-sizing:border-box"></div>
<div class="a" style="left:258px;top:563px;width:13px;height:13px;background:#efefef;"></div>
<svg width="3.4" height="6" viewBox="0 0 3.4 6" style="left:11.8px;top:566.6px"><path d="M3.4,0 L0,3 L3.4,6 Z" fill="#444"/></svg>
<svg width="3.4" height="6" viewBox="0 0 3.4 6" style="left:248.6px;top:566.6px"><path d="M0,0 L3.4,3 L0,6 Z" fill="#444"/></svg>
<div class="a" style="left:21px;top:564px;width:140px;height:11.5px;border:1px solid #a4a4a4;border-radius:2px;box-sizing:border-box;background:linear-gradient(#f6f6f6,#ececec 45%,#d9d9d9 50%,#cfcfcf);"></div>
<svg width="6" height="6" viewBox="0 0 6 6" style="left:88.0px;top:566.8px"><path d="M0.5,0 V6 M2.5,0 V6 M4.5,0 V6" stroke="#777" stroke-width="0.9"/></svg>
<div class="a" style="left:273.4px;top:44.6px;width:21.6px;height:33.4px;background:linear-gradient(90deg,#dadde4,#d5d9e0);border:1px solid #aeb5c0;border-left-color:#c3cad6;border-right-color:#bcc3ce;box-sizing:border-box;border-bottom:none;"></div>
<div class="a" style="left:273.4px;top:78.0px;width:21.6px;height:34.0px;background:linear-gradient(90deg,#dadde4,#d5d9e0);border:1px solid #aeb5c0;border-left-color:#c3cad6;border-right-color:#bcc3ce;box-sizing:border-box;border-bottom:none;"></div>
<div class="a" style="left:273.4px;top:112.0px;width:21.6px;height:34.4px;background:linear-gradient(90deg,#dadde4,#d5d9e0);border:1px solid #aeb5c0;border-left-color:#c3cad6;border-right-color:#bcc3ce;box-sizing:border-box;border-bottom:none;"></div>
<div class="a" style="left:272.6px;top:146.4px;width:23.6px;height:34.0px;background:#fff;"></div>
<div class="a" style="left:273.4px;top:180.4px;width:21.6px;height:33.8px;background:linear-gradient(90deg,#dadde4,#d5d9e0);border:1px solid #aeb5c0;border-left-color:#c3cad6;border-right-color:#bcc3ce;box-sizing:border-box;border-bottom:none;"></div>
<div class="a" style="left:273.4px;top:214.2px;width:21.6px;height:34.1px;background:linear-gradient(90deg,#dadde4,#d5d9e0);border:1px solid #aeb5c0;border-left-color:#c3cad6;border-right-color:#bcc3ce;box-sizing:border-box;border-bottom:none;"></div>
<div class="a" style="left:273.4px;top:248.3px;width:21.6px;height:33.9px;background:linear-gradient(90deg,#dadde4,#d5d9e0);border:1px solid #aeb5c0;border-left-color:#c3cad6;border-right-color:#bcc3ce;box-sizing:border-box;border-bottom:none;"></div>
<div class="a" style="left:273.4px;top:282.2px;width:21.6px;height:1px;background:#aeb6c3"></div>
<div class="a" style="left:273.4px;top:283.2px;width:21.6px;height:296px;background:#e3e7ee;border-right:1px solid #cdd3dd;box-sizing:border-box"></div>
<svg width="11.4" height="9" viewBox="0 0 11.4 9" style="left:280.0px;top:52.6px"><path d="M0.8,0.8 H7.4 L10.6,4.5 L7.4,8.2 H0.8 L2.4,4.5 Z" fill="#cfdcf7" stroke="#4a6cd0" stroke-width="1.1"/></svg>
<svg width="13" height="12.4" viewBox="0 0 13 12.4" style="left:278.6px;top:85.4px"><circle cx="3" cy="5.2" r="2.4" fill="#e8c08a"/><path d="M0.2,10.4 C0.2,7.6 5.4,7.6 5.6,10.4 Z" fill="#3cae3a"/><circle cx="10.2" cy="5.2" r="2.4" fill="#8d6ad0"/><path d="M7.6,10.4 C7.8,7.6 12.8,7.6 12.8,10.4 Z" fill="#e0362e"/><circle cx="6.5" cy="5.6" r="3" fill="#f0c89a"/><path d="M3.4,5 C3.4,1.4 9.6,1.4 9.6,5 C8.6,3.6 4.4,3.6 3.4,5 Z" fill="#2a2a2a"/><path d="M2.6,12.2 C2.6,8.4 10.4,8.4 10.4,12.2 Z" fill="#2f7fd6"/></svg>
<svg width="13" height="12.6" viewBox="0 0 13 12.6" style="left:279.0px;top:119.4px"><path d="M0.6,1.6 H4.4 L5.6,3 H10 V9.8 H0.6 Z" fill="#f7d85c" stroke="#c89a1a" stroke-width="0.8"/><path d="M1.4,4 H9.4 V9 H1.4 Z" fill="#fdf0a8"/><path d="M5.6,7.2 L9,5.4 L12.4,7.2 V10.6 L9,12.4 L5.6,10.6 Z" fill="#e23a2a" stroke="#a81e12" stroke-width="0.5"/><path d="M5.6,7.2 L9,9 L12.4,7.2 M9,9 V12.4" fill="none" stroke="#ff9a8a" stroke-width="0.5"/></svg>
<svg width="12.2" height="12.2" viewBox="-6.1 -6.1 12.2 12.2" style="left:280.4px;top:153.9px"><circle r="4.3" fill="#fff3d6" stroke="#f09a14" stroke-width="1.7"/><path d="M0,-6 V6 M-6,0 H6 M-4.2,-4.2 L4.2,4.2 M4.2,-4.2 L-4.2,4.2" stroke="#f0a83c" stroke-width="0.9"/><circle r="2.2" fill="#fbe3b0" stroke="#e89420" stroke-width="0.7"/></svg>
<svg width="9.4" height="11.4" viewBox="0 0 9.4 11.4" style="left:280.6px;top:188.0px"><path d="M1.6,0.8 H8.6 V9.6 H1.6 C0.4,9.6 0.4,8 1.6,8 Z" fill="#2fb04a" stroke="#1c7a30" stroke-width="0.8"/><path d="M1.6,9.6 C0.2,9.6 0.2,11 1.6,10.8 H8.6 V9.6" fill="#d8f0dc" stroke="#1c7a30" stroke-width="0.6"/><path d="M3,1.6 V8" stroke="#7fe090" stroke-width="1"/></svg>
<svg width="12.6" height="12" viewBox="0 0 12.6 12" style="left:278.4px;top:222.0px"><circle cx="6.3" cy="3.6" r="3" fill="#f5c520" stroke="#c08a08" stroke-width="0.7"/><circle cx="3.6" cy="8" r="3" fill="#f5c520" stroke="#c08a08" stroke-width="0.7"/><circle cx="9" cy="8" r="3" fill="#f5c520" stroke="#c08a08" stroke-width="0.7"/><circle cx="5.6" cy="2.8" r="1" fill="#fff2a8"/><circle cx="2.9" cy="7.2" r="1" fill="#fff2a8"/><circle cx="8.3" cy="7.2" r="1" fill="#fff2a8"/></svg>
<svg width="11.4" height="12.6" viewBox="0 0 11.4 12.6" style="left:279.4px;top:254.2px"><path d="M2.4,2 H7.4 L10.2,4.8 V11.6 H2.4 Z" fill="#fdfdfe" stroke="#5d6f8e" stroke-width="0.9"/><path d="M7.4,2 V4.8 H10.2" fill="#dfe6f0" stroke="#5d6f8e" stroke-width="0.7"/><path d="M3.2,12.2 H10.8 V6" fill="none" stroke="#9aa4b8" stroke-width="0.8"/><circle cx="2.6" cy="2.6" r="2.2" fill="#f6cf3c"/><circle cx="2.6" cy="2.6" r="1" fill="#fff6c0"/></svg>
<div class="a" style="left:302px;top:20.2px;width:493px;height:563.3px;border:1px solid #a7afbc;border-radius:0 0 2px 2px;background:#e6eaf1;box-sizing:border-box;"></div>
<div class="a" style="left:303.6px;top:2.4px;width:213px;height:18.8px;border:1px solid #a7afbc;border-bottom:none;border-radius:3px 3px 0 0;box-sizing:border-box;background:linear-gradient(#f6f8fb,#e9edf4);"></div>
<div class="a" style="left:303px;top:21.2px;width:491px;height:2px;background:#e9edf4;"></div>
<div class="a" style="left:305px;top:23px;width:486px;height:19.4px;border-radius:2.5px;background:linear-gradient(#ffffff,#f7f9fc 55%,#e9eef5);box-shadow:0 1px 0 #c9d1dd;"></div>
<div class="a" style="left:305px;top:45px;width:18px;height:534.4px;border-radius:2px;background:linear-gradient(90deg,#ffffff,#f6f8fb 55%,#e6eaf1);"></div>
<div class="a" id="canvas" style="left:324px;top:45px;width:453px;height:520px;background:#fff;"></div>
<svg width="453" height="520" viewBox="324 45 453 520" style="left:324px;top:45px;overflow:hidden" shape-rendering="auto"><path d="M340.20,45 V565 M356.37,45 V565 M372.53,45 V565 M388.69,45 V565 M404.86,45 V565 M421.02,45 V565 M437.19,45 V565 M453.36,45 V565 M469.52,45 V565 M485.68,45 V565 M501.85,45 V565 M518.01,45 V565 M534.18,45 V565 M550.35,45 V565 M566.51,45 V565 M582.67,45 V565 M598.84,45 V565 M615.00,45 V565 M631.17,45 V565 M647.34,45 V565 M663.50,45 V565 M679.66,45 V565 M695.83,45 V565 M711.99,45 V565 M728.16,45 V565 M744.33,45 V565 M760.49,45 V565 M776.65,45 V565 M324,61.75 H777 M324,77.94 H777 M324,94.13 H777 M324,110.32 H777 M324,126.51 H777 M324,142.70 H777 M324,158.89 H777 M324,175.08 H777 M324,191.27 H777 M324,207.46 H777 M324,223.65 H777 M324,239.84 H777 M324,256.03 H777 M324,272.22 H777 M324,288.41 H777 M324,304.60 H777 M324,320.79 H777 M324,336.98 H777 M324,353.17 H777 M324,369.36 H777 M324,385.55 H777 M324,401.74 H777 M324,417.93 H777 M324,434.12 H777 M324,450.31 H777 M324,466.50 H777 M324,482.69 H777 M324,498.88 H777 M324,515.07 H777 M324,531.26 H777 M324,547.45 H777 M324,563.64 H777" stroke="#e4e4e4" stroke-width="1" fill="none"/></svg>
<div class="a" style="left:777px;top:45px;width:14px;height:520px;background:#dde3ed;"></div>
<div class="a" style="left:324px;top:565px;width:453px;height:14px;background:#dde3ed;"></div>
<div class="a" style="left:777px;top:565px;width:14px;height:14px;background:#e3e8f0;"></div>
<div class="row" style="left:310.8px;top:6.8px;color:#1c1c28;transform:scaleX(0.870);">Стратегическая карта ООО "ИнТехПроект"</div>
<svg width="8" height="6.4" viewBox="0 0 8 6.4" style="left:503.4px;top:9.2px"><path d="M0.7,0.5 L7.3,5.9 M7.3,0.5 L0.7,5.9" stroke="#3f434c" stroke-width="1.45"/></svg>
<svg width="6" height="3.2" viewBox="0 0 6 3.2" style="left:781.2px;top:8.8px"><path d="M0,0 H6 L3,3.2 Z" fill="#4a4f5a"/></svg>
<svg width="12.5" height="12.5" viewBox="0 0 12.5 12.5" style="left:307.6px;top:26.6px"><rect x="0.6" y="2.2" width="8.2" height="9.6" fill="#f4f6fa" stroke="#6c7f9c" stroke-width="1"/><rect x="1.4" y="3" width="6.6" height="1.6" fill="#c9d4e6"/><path d="M2,10.9 H9.6 V4" fill="none" stroke="#8d9bb3" stroke-width="0.9"/><path d="M3.2,8.6 L9.6,1.8 L11,3.2 L4.6,9.8 Z" fill="#f2c93a" stroke="#a9821a" stroke-width="0.5"/><path d="M9.6,1.8 L10.5,0.8 L12,2.2 L11,3.2 Z" fill="#e0523a"/><path d="M3.2,8.6 L2.6,10.4 L4.6,9.8 Z" fill="#3a3a3a"/></svg>
<div class="row" style="left:322.3px;top:27.6px;color:#111;transform:scaleX(0.895);">Свойства</div>
<div class="a" style="left:370.3px;top:27.5px;width:1.3px;height:12.0px;background:#a6b2c6"></div>
<div class="a" style="left:371.3px;top:27.5px;width:1px;height:12.0px;background:#fff;opacity:.8"></div>
<svg width="11.8" height="11.2" viewBox="0 0 11.8 11.2" style="left:376.0px;top:27.6px"><path d="M0.6,0.6 H10.4 L11.2,1.4 V10.6 H0.6 Z" fill="#4b4fd2" stroke="#2b2e96" stroke-width="0.9"/><rect x="2.6" y="0.8" width="6.6" height="4.6" fill="#f4f6ff"/><rect x="3.2" y="7.2" width="5.6" height="3.4" fill="#20205c"/><rect x="6.4" y="7.8" width="1.6" height="2.2" fill="#e8ebff"/></svg>
<div class="a" style="left:393.9px;top:27.5px;width:1.3px;height:12.0px;background:#a6b2c6"></div>
<div class="a" style="left:394.9px;top:27.5px;width:1px;height:12.0px;background:#fff;opacity:.8"></div>
<div class="a" style="left:396.6px;top:24.5px;width:18.4px;height:17.4px;background:linear-gradient(#ffe89a,#ffd95e);border:1px solid #efbf3a;box-sizing:border-box;border-radius:1px"></div>
<svg width="14" height="13.4" viewBox="0 0 14 13.4" style="left:399.0px;top:26.8px"><rect x="1.6" y="1.2" width="10.4" height="9.6" rx="1.6" fill="#eef3fd" stroke="#6f93dc" stroke-width="1"/><path d="M1,1.4 H5 M3,1.4 V6.4 M2,6.4 H4" stroke="#222" stroke-width="0.9" fill="none"/><ellipse cx="9.2" cy="9.4" rx="4" ry="3.2" fill="#2f5fb4" stroke="#1d3f86" stroke-width="0.6"/><ellipse cx="9.2" cy="9.4" rx="2.3" ry="1.7" fill="#e8f0ff"/><circle cx="9.2" cy="9.4" r="1" fill="#1d3f86"/></svg>
<div class="a" style="left:417.2px;top:27.5px;width:1.3px;height:12.0px;background:#a6b2c6"></div>
<div class="a" style="left:418.2px;top:27.5px;width:1px;height:12.0px;background:#fff;opacity:.8"></div>
<svg width="11.8" height="10.8" viewBox="0 0 11.8 10.8" style="left:423.3px;top:27.6px"><rect x="0.6" y="0.6" width="10.6" height="9.6" fill="#f2f5fb" stroke="#5c74a4" stroke-width="0.9"/><path d="M1,7.6 H10.8 V9.8 H1 Z" fill="#a9b9dc"/><path d="M2.2,6.2 L4.2,1.8 L6.2,6.2 M3,4.6 H5.4" fill="none" stroke="#1a1a1a" stroke-width="1.1"/><path d="M7.4,3 H10 M7.4,5 H10" stroke="#9fb0d4" stroke-width="0.7"/></svg>
<svg width="11.8" height="10.8" viewBox="0 0 11.8 10.8" style="left:441.2px;top:27.6px"><path d="M7.6,0.8 L10.8,3.2 L7.2,6.6 L4.8,4.4 Z" fill="#d9dce2" stroke="#c3c7cf" stroke-width="0.6"/><path d="M4.8,4.4 L7.2,6.6 L4.6,10 C3,10.4 1.2,9.6 0.8,7.6 Z" fill="#cfd3da" stroke="#bfc3cb" stroke-width="0.6"/></svg>
<div class="a" style="left:459.3px;top:27.5px;width:1.3px;height:12.0px;background:#a6b2c6"></div>
<div class="a" style="left:460.3px;top:27.5px;width:1px;height:12.0px;background:#fff;opacity:.8"></div>
<svg width="12" height="11.8" viewBox="0 0 12 11.8" style="left:464.0px;top:27.4px"><rect x="3" y="0.6" width="8.4" height="8.6" fill="#e3e5e9" stroke="#b9bcc3" stroke-width="0.8"/><path d="M3.4,3.4 H11 M7.2,0.8 V9" stroke="#c3c6cc" stroke-width="0.8"/><path d="M0.4,8.2 L4,5 V7 H7 V9.6 H4 V11.4 Z" fill="#a9acb3"/></svg>
<svg width="5" height="2.8" viewBox="0 0 5 2.8" style="left:480.8px;top:32.0px"><path d="M0,0 H5 L2.5,2.8 Z" fill="#8f939b"/></svg>
<svg width="12.4" height="11.8" viewBox="0 0 12.4 11.8" style="left:490.0px;top:27.4px"><rect x="0.6" y="0.6" width="8.4" height="8.6" fill="#e3e5e9" stroke="#b9bcc3" stroke-width="0.8"/><path d="M0.8,3.4 H8.8 M4.6,0.8 V9" stroke="#c3c6cc" stroke-width="0.8"/><path d="M12.2,8.2 L8.6,5 V7 H5.4 V9.6 H8.6 V11.4 Z" fill="#a9acb3"/></svg>
<svg width="5" height="2.8" viewBox="0 0 5 2.8" style="left:506.8px;top:32.0px"><path d="M0,0 H5 L2.5,2.8 Z" fill="#8f939b"/></svg>
<div class="a" style="left:515.8px;top:27.5px;width:1.3px;height:12.0px;background:#a6b2c6"></div>
<div class="a" style="left:516.8px;top:27.5px;width:1px;height:12.0px;background:#fff;opacity:.8"></div>
<div class="a" style="left:518px;top:24.5px;width:52.4px;height:17px;background:#fff;"></div>
<div class="row" style="left:521.8px;top:27.4px;color:#111;transform:scaleX(0.895);">106%</div>
<div class="a" style="left:570.4px;top:24.5px;width:8.8px;height:17px;background:linear-gradient(#ffe083,#ffd257);"></div>
<svg width="4.6" height="2.6" viewBox="0 0 4.6 2.6" style="left:572.5px;top:32.3px"><path d="M0,0 H4.6 L2.3,2.6 Z" fill="#111"/></svg>
<svg width="13.2" height="13.4" viewBox="0 0 13.2 13.4" style="left:583.4px;top:26.8px"><path d="M4.6,4.4 H2.8 C0,4.4 0,9 2.8,9 H4.6" fill="none" stroke="#51698c" stroke-width="1.5"/><path d="M8.6,4.4 H10.4 C13.2,4.4 13.2,9 10.4,9 H8.6" fill="none" stroke="#51698c" stroke-width="1.5"/><path d="M3.6,6.7 H5.4 M7.8,6.7 H9.6" stroke="#2f4468" stroke-width="1.1"/><path d="M5.2,0.6 L6,2.8 M8,0.6 L7.2,2.8 M3,1.6 L4.4,3.2 M10.2,1.6 L8.8,3.2 M5.2,12.8 L6,10.6 M8,12.8 L7.2,10.6 M3,11.8 L4.4,10.2 M10.2,11.8 L8.8,10.2" stroke="#7f93b3" stroke-width="0.7"/></svg>
<div class="a" style="left:601.9px;top:27.5px;width:1.3px;height:12.0px;background:#a6b2c6"></div>
<div class="a" style="left:602.9px;top:27.5px;width:1px;height:12.0px;background:#fff;opacity:.8"></div>
<svg width="13" height="13" viewBox="0 0 13 13" style="left:606.0px;top:26.5px"><defs><radialGradient id="gg" cx="35%" cy="30%" r="75%"><stop offset="0" stop-color="#7fc0f6"/><stop offset="0.55" stop-color="#2f78c8"/><stop offset="1" stop-color="#17458c"/></radialGradient></defs><circle cx="6.5" cy="6.5" r="6.1" fill="url(#gg)" stroke="#1c4a8e" stroke-width="0.6"/><path d="M3,8.6 C2.2,5.4 4.6,2.6 7.6,3 C6,3.6 5,5 5.2,6.6 C6.4,5.6 8.4,5.8 9.8,6.6 C8.6,8.8 5.4,10 3,8.6 Z" fill="#f2f7fd"/></svg>
<div class="row" style="left:621.8px;top:27.6px;color:#111;transform:scaleX(0.895);">Действия</div>
<svg width="5.2" height="2.8" viewBox="0 0 5.2 2.8" style="left:666.7px;top:32.4px"><path d="M0,0 H5.2 L2.6,2.8 Z" fill="#222"/></svg>
<svg width="9" height="8.6" viewBox="0 0 9 8.6" style="left:735.4px;top:29.6px"><path d="M0.9,0.9 L8.1,7.7 M8.1,0.9 L0.9,7.7" stroke="#ee2211" stroke-width="1.7"/></svg>
<div class="row" style="left:748.1px;top:27.6px;color:#111;transform:scaleX(0.940);">Закрыть</div>
<svg width="11" height="7" viewBox="0 0 11 7" style="left:307.6px;top:49.8px"><path d="M0,3.5 H6.4" stroke="#2f7fc8" stroke-width="1.3"/><path d="M5.6,0.6 L10.6,3.5 L5.6,6.4 Z" fill="#2f7fc8"/></svg>
<div class="a" style="left:307.5px;top:64.6px;width:14px;height:1px;background:#a9b6c9"></div>
<svg width="12.6" height="12.4" viewBox="0 0 12.6 12.4" style="left:308.2px;top:69.8px"><rect x="0.6" y="4" width="9.4" height="7.8" fill="#f4f7fd" stroke="#5b7dc0" stroke-width="0.9"/><path d="M2.2,10 L3.8,6 L5.4,10 M2.8,8.6 H4.8" fill="none" stroke="#1a1a1a" stroke-width="0.9"/><path d="M6.6,7 H9 M6.6,9 H9" stroke="#8ea4d0" stroke-width="0.7"/><path d="M4.8,2.8 H8.6 V0.4 L12.4,3.6 L8.6,6.8 V4.6 H4.8 Z" fill="#3f86ea" stroke="#1f55b8" stroke-width="0.6"/></svg>
<div class="a" style="left:307.5px;top:87.8px;width:14px;height:1px;background:#a9b6c9"></div>
<svg width="14" height="14" viewBox="-7 -7 14 14" style="left:306.9px;top:92.5px"><circle cx="-0.8" cy="0.9" r="4.5" fill="#fff" stroke="#e41f28" stroke-width="2.1"/><circle cx="-0.8" cy="0.9" r="1.8" fill="#e41f28"/><path d="M-0.4,0.4 L4.6,-4.6" stroke="#ee8a18" stroke-width="1.7"/><path d="M3.2,-5.6 L5.6,-5.8 L5.4,-3.2 M4.6,-4.6 L6.2,-6.2" fill="none" stroke="#4a4a4a" stroke-width="0.9"/></svg>
<svg width="14" height="13" viewBox="-7 -6.5 14 13" style="left:307.3px;top:111.8px"><rect x="-4.4" y="-2.2" width="2.5" height="7.2" fill="#e0323a"/><rect x="-0.9" y="-5.6" width="2.5" height="10.6" fill="#2d8fd8"/><rect x="2.6" y="-3.8" width="2.5" height="8.8" fill="#4cae2c"/><path d="M-5.8,-5.6 V5.4 H6" fill="none" stroke="#9c8a7a" stroke-width="0.8"/></svg>
<svg width="453" height="520" viewBox="324 45 453 520" style="left:324px;top:45px;overflow:hidden"><ellipse cx="600.7" cy="70.7" rx="45.0" ry="20.7" fill="#e5ebf7" stroke="#404040" stroke-width="1.1"/><text class="dt" x="600.7" y="73.6">Рост прибыли</text><ellipse cx="546.5" cy="128.9" rx="45.3" ry="21.1" fill="#e5ebf7" stroke="#404040" stroke-width="1.1"/><text class="dt" x="546.5" y="120.6">Увеличение</text><text class="dt" x="546.5" y="131.4">количества</text><text class="dt" x="546.5" y="142.2">клиентов</text><ellipse cx="652.2" cy="129.2" rx="44.9" ry="21.0" fill="#e5ebf7" stroke="#404040" stroke-width="1.1"/><text class="dt" x="652.2" y="126.1">Сокращение</text><text class="dt" x="652.2" y="136.9">издержек</text><ellipse cx="490.6" cy="194.3" rx="45.2" ry="20.7" fill="#e5ebf7" stroke="#404040" stroke-width="1.1"/><text class="dt" x="490.6" y="191.2">Сохранение</text><text class="dt" x="490.6" y="202.0">клиентской базы</text><ellipse cx="595.7" cy="194.3" rx="44.8" ry="20.7" fill="#e5ebf7" stroke="#404040" stroke-width="1.1"/><text class="dt" x="595.7" y="191.2">Привлечение</text><text class="dt" x="595.7" y="202.0">клиентов</text><ellipse cx="439.4" cy="258.5" rx="49.3" ry="20.3" fill="#c5f68e" stroke="#404040" stroke-width="1.1"/><text class="dt" x="439.4" y="250.2">Повышение</text><text class="dt" x="439.4" y="261.0">удовлетворенности</text><text class="dt" x="439.4" y="271.8">клиентов</text><ellipse cx="380.6" cy="323.7" rx="49.5" ry="21.9" fill="#c5f68e" stroke="#404040" stroke-width="1.1"/><text class="dt" x="380.6" y="315.4">Своевременное</text><text class="dt" x="380.6" y="326.2">выполнение</text><text class="dt" x="380.6" y="337.0">проектных работ</text><ellipse cx="491.4" cy="323.5" rx="45.3" ry="21.0" fill="#c5f68e" stroke="#404040" stroke-width="1.1"/><text class="dt" x="491.4" y="315.2">Повышение</text><text class="dt" x="491.4" y="326.0">качества проектных</text><text class="dt" x="491.4" y="336.8">работ</text><ellipse cx="721.6" cy="323.2" rx="49.0" ry="20.4" fill="#e5ebf7" stroke="#404040" stroke-width="1.1"/><text class="dt" x="721.6" y="314.9">Оптимизация</text><text class="dt" x="721.6" y="325.7">запасов ТМЦ и</text><text class="dt" x="721.6" y="336.5">инструмента</text><ellipse cx="433.3" cy="406.0" rx="45.7" ry="20.3" fill="#c5f68e" stroke="#404040" stroke-width="1.1"/><text class="dt" x="433.3" y="397.7">Закупка</text><text class="dt" x="433.3" y="408.5">качественных ТМЦ</text><text class="dt" x="433.3" y="419.3">и инструмента</text><ellipse cx="551.1" cy="406.6" rx="56.6" ry="25.2" fill="#c5f68e" stroke="#404040" stroke-width="1.1"/><text class="dt" x="551.1" y="398.3">Усиление контроля</text><text class="dt" x="551.1" y="409.1">строительно-монтажных</text><text class="dt" x="551.1" y="419.9">работ</text><ellipse cx="664.6" cy="406.3" rx="49.2" ry="21.8" fill="#c5f68e" stroke="#404040" stroke-width="1.1"/><text class="dt" x="664.6" y="398.0">Своевременная</text><text class="dt" x="664.6" y="408.8">доставка ТМЦ и</text><text class="dt" x="664.6" y="419.6">инструмента</text><ellipse cx="608.2" cy="470.7" rx="48.6" ry="21.2" fill="#e5ebf7" stroke="#404040" stroke-width="1.1"/><text class="dt" x="608.2" y="462.4">Точное</text><text class="dt" x="608.2" y="473.2">планирование</text><text class="dt" x="608.2" y="484.0">проектов</text><ellipse cx="495.8" cy="538.4" rx="44.3" ry="19.8" fill="#c5f68e" stroke="#404040" stroke-width="1.1"/><text class="dt" x="495.8" y="530.1">Повышение</text><text class="dt" x="495.8" y="540.9">квалификации</text><text class="dt" x="495.8" y="551.7">сотрудников</text><path d="M547.0,107.8 Q547.5,92.0 560.9,86.2" fill="none" stroke="#3c70c6" stroke-width="1.4"/><path d="M566.2,83.9 L560.1,90.4 L557.3,83.9 Z" fill="#3c70c6"/><path d="M652.7,108.2 Q650.0,94.0 639.1,87.6" fill="none" stroke="#3c70c6" stroke-width="1.4"/><path d="M634.2,84.7 L643.0,85.8 L639.5,91.9 Z" fill="#3c70c6"/><path d="M494.4,173.6 Q496.0,155.0 504.7,145.3" fill="none" stroke="#3c70c6" stroke-width="1.4"/><path d="M508.5,141.0 L505.6,149.4 L500.4,144.8 Z" fill="#3c70c6"/><path d="M595.2,173.6 Q593.0,157.0 585.9,148.4" fill="none" stroke="#3c70c6" stroke-width="1.4"/><path d="M582.2,144.0 L590.1,148.1 L584.7,152.5 Z" fill="#3c70c6"/><path d="M438.9,237.5 Q440.0,220.0 451.3,211.4" fill="none" stroke="#3c70c6" stroke-width="1.4"/><path d="M455.9,207.9 L451.5,215.7 L447.3,210.1 Z" fill="#3c70c6"/><path d="M518.0,306.5 Q535.0,255.0 566.4,216.3" fill="none" stroke="#3c70c6" stroke-width="1.4"/><path d="M570.0,211.8 L567.6,220.4 L562.1,216.0 Z" fill="#3c70c6"/><path d="M381.0,302.0 Q382.5,284.0 396.4,275.7" fill="none" stroke="#3c70c6" stroke-width="1.4"/><path d="M401.3,272.8 L396.0,280.0 L392.5,274.0 Z" fill="#3c70c6"/><path d="M490.6,301.6 Q489.0,285.0 483.4,277.6" fill="none" stroke="#3c70c6" stroke-width="1.4"/><path d="M479.9,273.0 L487.6,277.4 L482.1,281.6 Z" fill="#3c70c6"/><path d="M433.7,385.8 Q436.5,358.0 453.0,342.7" fill="none" stroke="#3c70c6" stroke-width="1.4"/><path d="M457.2,338.8 L453.6,346.9 L448.8,341.8 Z" fill="#3c70c6"/><path d="M550.4,383.0 Q547.0,357.0 533.6,341.7" fill="none" stroke="#3c70c6" stroke-width="1.4"/><path d="M529.8,337.4 L537.8,341.3 L532.6,345.9 Z" fill="#3c70c6"/><path d="M494.2,519.5 Q490.1,432.0 490.4,350.7" fill="none" stroke="#3c70c6" stroke-width="1.4"/><path d="M490.4,345.0 L493.9,353.2 L486.9,353.2 Z" fill="#3c70c6"/><path d="M642.0,387.4 Q538.9,382.7 429.5,337.0" fill="none" stroke="#3c70c6" stroke-width="1.4"/><path d="M424.2,334.8 L433.1,334.7 L430.4,341.2 Z" fill="#3c70c6"/><path d="M664.5,384.9 Q666.0,358.0 678.7,341.6" fill="none" stroke="#3c70c6" stroke-width="1.4"/><path d="M682.2,337.1 L679.9,345.7 L674.4,341.4 Z" fill="#3c70c6"/><path d="M722.0,302.8 Q720.0,215.0 685.7,151.9" fill="none" stroke="#3c70c6" stroke-width="1.4"/><path d="M683.0,146.9 L690.0,152.4 L683.8,155.8 Z" fill="#3c70c6"/><path d="M606.5,450.4 Q607.5,432.0 619.7,422.4" fill="none" stroke="#3c70c6" stroke-width="1.4"/><path d="M624.2,418.8 L619.9,426.6 L615.6,421.1 Z" fill="#3c70c6"/><path d="M529.8,522.7 Q541.0,498.0 559.3,482.2" fill="none" stroke="#3c70c6" stroke-width="1.4"/><path d="M563.6,478.4 L559.7,486.4 L555.1,481.1 Z" fill="#3c70c6"/></svg>
<div class="a" style="left:323px;top:44px;width:454px;height:1px;background:#a4a9b2"></div>
<div class="a" style="left:323.8px;top:44px;width:1px;height:521px;background:#b4b8c0"></div>
<svg width="7.6" height="4.2" viewBox="0 0 7.6 4.2" style="left:779.8px;top:50.0px"><path d="M0,4.2 L3.8,0 L7.6,4.2 Z" fill="#3c3f46"/></svg>
<svg width="7.6" height="4.2" viewBox="0 0 7.6 4.2" style="left:779.8px;top:557.0px"><path d="M0,0 L3.8,4.2 L7.6,0 Z" fill="#3c3f46"/></svg>
<svg width="4.2" height="7.6" viewBox="0 0 4.2 7.6" style="left:329.4px;top:568.4px"><path d="M4.2,0 L0,3.8 L4.2,7.6 Z" fill="#3c3f46"/></svg>
<svg width="4.2" height="7.6" viewBox="0 0 4.2 7.6" style="left:768.0px;top:568.4px"><path d="M0,0 L4.2,3.8 L0,7.6 Z" fill="#3c3f46"/></svg>
<div class="a" style="left:776.9px;top:217.6px;width:13.2px;height:173px;border:1px solid #8e97a6;border-radius:2px;box-sizing:border-box;background:linear-gradient(90deg,#fbfcfd,#eceff4 50%,#dde2ea);"></div>
<svg width="7" height="7" viewBox="0 0 7 7" style="left:780.0px;top:300.8px"><path d="M0,0.5 H7 M0,2.5 H7 M0,4.5 H7 M0,6.5 H7" stroke="#7f8796" stroke-width="0.8"/></svg>
<div class="a" style="left:504px;top:565.8px;width:93px;height:12.6px;border:1px solid #8e97a6;border-radius:2px;box-sizing:border-box;background:linear-gradient(#f8f9fb,#e9ecf1 45%,#d9dde5 55%,#d3d8e0);"></div>
<svg width="7" height="7" viewBox="0 0 7 7" style="left:546.8px;top:568.6px"><path d="M0.5,0 V7 M2.5,0 V7 M4.5,0 V7 M6.5,0 V7" stroke="#7f8796" stroke-width="0.8"/></svg>
<svg width="12" height="18" viewBox="0 0 12 18" style="left:208.4px;top:473.4px"><path d="M0.6,0.8 V14.6 L3.6,11.8 L5.8,16.6 L7.8,15.7 L5.6,11 H9.8 Z" fill="#fff" stroke="#111" stroke-width="0.9" stroke-linejoin="miter"/></svg>
</body></html>
